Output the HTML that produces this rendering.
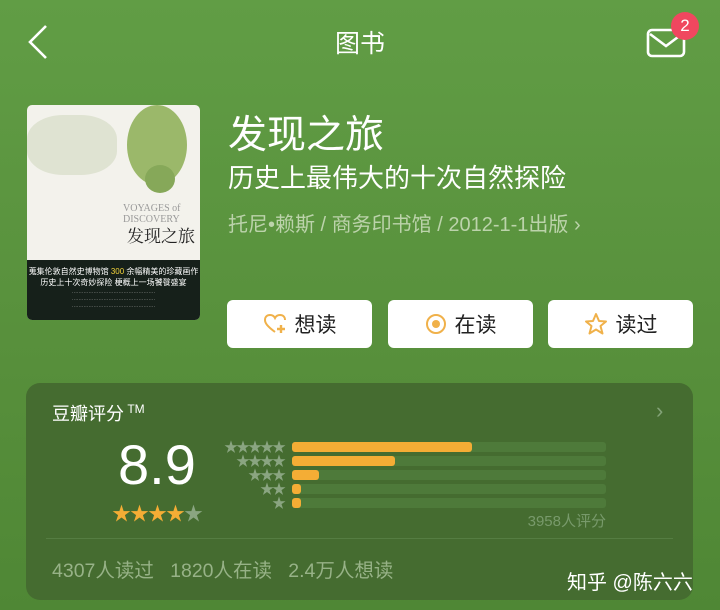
<!DOCTYPE html>
<html><head><meta charset="utf-8"><style>
*{margin:0;padding:0;box-sizing:border-box}
body{width:720px;height:610px;overflow:hidden;background:linear-gradient(#619d45,#578f3b 60%,#4f8735);font-family:"Liberation Sans","Noto Sans CJK SC",sans-serif;position:relative;color:#fff}
.a{position:absolute}
.btn{position:absolute;top:300px;width:145px;height:48px;background:#fff;border-radius:6px;display:flex;align-items:center;justify-content:center;gap:8px;font-size:21px;color:#222}
.row{position:absolute;left:292px;width:314px;height:10px;background:#4e7a3a;border-radius:3px}
.row i{display:block;height:10px;background:#f4ad35;border-radius:3px}
.sl{position:absolute;right:436px;font-size:14px;color:#8aa581;letter-spacing:-2px;line-height:14px}
</style></head><body>
<svg class="a" style="left:26px;top:24px" width="24" height="36"><path d="M20 2 L4 18 L20 34" stroke="#fff" stroke-width="2.6" fill="none"/></svg>
<div class="a" style="left:0;width:720px;top:24px;text-align:center;font-size:25px">图书</div>
<svg class="a" style="left:646px;top:26px" width="42" height="34"><rect x="2" y="4" width="36" height="26" rx="4" stroke="#fff" stroke-width="2.6" fill="none"/><path d="M4 8 L20 20 L36 8" stroke="#fff" stroke-width="2.6" fill="none"/></svg>
<div class="a" style="left:671px;top:12px;width:28px;height:28px;border-radius:50%;background:#f0475f;text-align:center;line-height:28px;font-size:17px">2</div>

<div class="a" style="left:27px;top:105px;width:173px;height:215px;border-radius:5px;overflow:hidden;background:#f3f2ec">
 <div class="a" style="left:100px;top:0;width:60px;height:80px;border-radius:50%;background:#9bb86a"></div>
 <div class="a" style="left:118px;top:60px;width:30px;height:28px;border-radius:50%;background:#86a859"></div>
 <div class="a" style="left:0;top:10px;width:90px;height:60px;background:#dfe3d2;border-radius:40%"></div>
 <div class="a" style="left:96px;top:98px;font-family:'Liberation Serif',serif;font-size:10px;color:#999">VOYAGES of<br>DISCOVERY</div>
 <div class="a" style="left:100px;top:117px;font-size:17px;color:#222;font-family:'Liberation Serif','Noto Serif CJK SC',serif">发现之旅</div>
 <div class="a" style="left:0;top:155px;width:173px;height:60px;background:#16201a;font-size:8px;color:#fff;text-align:center;padding-top:6px;line-height:11px">蒐集伦敦自然史博物馆 <span style="color:#f2d23a">300</span> 余幅精美的珍藏画作<br>历史上十次奇妙探险 梗概上一场饕餮盛宴<div style="font-size:5px;color:#aaa;line-height:7px;margin-top:2px">··················································<br>··················································<br>··················································</div></div>
</div>

<div class="a" style="left:228px;top:104px;font-size:39px">发现之旅</div>
<div class="a" style="left:228px;top:158px;font-size:26px">历史上最伟大的十次自然探险</div>
<div class="a" style="left:228px;top:208px;font-size:20px;color:#bcd3ab">托尼•赖斯 / 商务印书馆 / 2012-1-1出版 ›</div>

<div class="btn" style="left:227px"><svg width="24" height="22"><path d="M12 19 C4 13 2 10 2 7 C2 4 4 2 7 2 C9 2 11 3 12 5 C13 3 15 2 17 2 C20 2 22 4 22 7" stroke="#f0b14a" stroke-width="2" fill="none"/><path d="M18 12 V20 M14 16 H22" stroke="#f0b14a" stroke-width="2.4"/></svg>想读</div>
<div class="btn" style="left:388px"><svg width="22" height="22"><circle cx="11" cy="11" r="9" stroke="#f0b14a" stroke-width="2" fill="none"/><circle cx="11" cy="11" r="4" fill="#f0b14a"/></svg>在读</div>
<div class="btn" style="left:548px"><svg width="24" height="24"><path d="M12 2 L15 9 L22 9.5 L16.5 14 L18.5 21.5 L12 17.5 L5.5 21.5 L7.5 14 L2 9.5 L9 9 Z" stroke="#f0b14a" stroke-width="2" fill="none" stroke-linejoin="round"/></svg>读过</div>

<div class="a" style="left:26px;top:383px;width:667px;height:217px;border-radius:14px;background:#456c30"></div>
<div class="a" style="left:52px;top:400px;font-size:18px">豆瓣评分<sup style="font-size:12px"> TM</sup></div>
<div class="a" style="left:656px;top:398px;font-size:22px;color:#83a277">›</div>
<div class="a" style="left:118px;top:434px;font-size:56px;line-height:62px">8.9</div>
<div class="a" style="left:112px;top:499px;font-size:19px;color:#f4ad35;letter-spacing:-1px">★★★★<span style="color:#8aa581">★</span></div>
<div class="sl" style="top:440px">★★★★★</div>
<div class="sl" style="top:454px">★★★★</div>
<div class="sl" style="top:468px">★★★</div>
<div class="sl" style="top:482px">★★</div>
<div class="sl" style="top:496px">★</div>
<div class="row" style="top:442px"><i style="width:180px"></i></div>
<div class="row" style="top:456px"><i style="width:103px"></i></div>
<div class="row" style="top:470px"><i style="width:27px"></i></div>
<div class="row" style="top:484px"><i style="width:9px"></i></div>
<div class="row" style="top:498px"><i style="width:9px"></i></div>
<div class="a" style="right:114px;top:510px;font-size:15px;color:#789a6b">3958人评分</div>
<div class="a" style="left:46px;top:538px;width:627px;height:1px;background:#557d42"></div>
<div class="a" style="left:52px;top:554px;font-size:19.5px;color:#97b287">4307人读过&nbsp;&nbsp;&nbsp;1820人在读&nbsp;&nbsp;&nbsp;2.4万人想读</div>
<div class="a" style="left:567px;top:566px;font-size:20px">知乎 @陈六六</div>
</body></html>
